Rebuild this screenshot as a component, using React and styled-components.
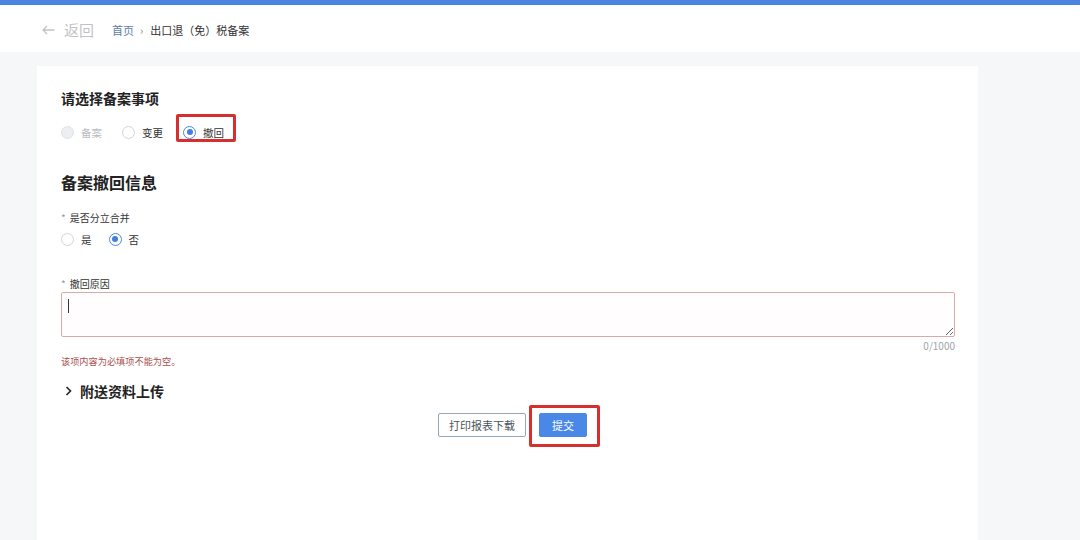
import React from "react";
import styled, { createGlobalStyle } from "styled-components";

const Global = createGlobalStyle`
  html, body { margin: 0; padding: 0; background: #f6f7f9; }
  body { font-family: "Noto Sans CJK SC", "Noto Sans", sans-serif; color: #222; }
  * { box-sizing: border-box; }
`;

const Page = styled.div`
  width: 1080px;
  height: 540px;
  overflow: hidden;
  background: #f6f7f9;
  display: flex;
  flex-direction: column;
`;

const TopBar = styled.div`
  height: 5px;
  background: #4a86dd;
`;

const Header = styled.div`
  height: 47px;
  background: #fff;
  display: flex;
  align-items: center;
  padding-left: 42px;
  padding-top: 2px;
`;

const Back = styled.div`
  display: flex;
  align-items: center;
  gap: 9px;
  color: #bfc3c8;
  font-size: 15px;
  margin-right: 18px;
`;

const Crumb = styled.span`
  font-size: 11px;
  color: ${(p) => (p.$link ? "#5b7ea6" : "#333")};
`;

const Sep = styled.span`
  font-size: 11px;
  color: #888;
  margin: 0 7px 0 6px;
`;

const Card = styled.div`
  margin: 14px 0 0 37px;
  width: 941px;
  flex: 1;
  background: #fff;
  padding: 22px 23px 0 24px;
  display: flex;
  flex-direction: column;
`;

const Title = styled.div`
  font-size: ${(p) => p.$size || 14}px;
  line-height: ${(p) => (p.$size || 14) + 6}px;
  font-weight: 700;
  color: #222;
  margin-top: ${(p) => p.$mt || 0}px;
  display: flex;
  align-items: center;
`;

const RadioRow = styled.div`
  display: flex;
  align-items: center;
  height: 20px;
  gap: ${(p) => p.$gap || 20}px;
  margin-top: ${(p) => p.$mt || 0}px;
`;

const RadioItem = styled.label`
  position: relative;
  display: flex;
  align-items: center;
  gap: 7px;
  font-size: 10.5px;
  color: ${(p) => (p.$disabled ? "#b8bcc2" : "#333")};
`;

const Circle = styled.span`
  width: 13px;
  height: 13px;
  border-radius: 50%;
  border: 1px solid ${(p) => (p.$checked ? "#4a88e0" : p.$disabled ? "#e0e2e6" : "#d2d5da")};
  background: ${(p) => (p.$disabled ? "#eceef1" : "#fff")};
  display: flex;
  align-items: center;
  justify-content: center;
  &::after {
    content: "";
    display: ${(p) => (p.$checked ? "block" : "none")};
    width: 6px;
    height: 6px;
    border-radius: 50%;
    background: #3f7fe0;
  }
`;

const Highlight = styled.span`
  position: absolute;
  left: ${(p) => p.$l}px;
  top: ${(p) => p.$t}px;
  width: ${(p) => p.$w}px;
  height: ${(p) => p.$h}px;
  border: 3px solid #d5302e;
  border-radius: 2px;
  pointer-events: none;
`;

const FieldLabel = styled.div`
  font-size: 10px;
  line-height: 14px;
  color: #333;
  margin-top: ${(p) => p.$mt || 0}px;
  &::before {
    content: "*";
    color: #999;
    margin-right: 4px;
  }
`;

const AreaWrap = styled.div`
  position: relative;
  margin-top: 1px;
  display: flex;
`;

const Area = styled.textarea`
  width: 100%;
  height: 45px;
  border: 1px solid #dba9a9;
  border-radius: 2px;
  background: #fffdfd;
  resize: vertical;
  outline: none;
  font-family: inherit;
  font-size: 12px;
`;

const Caret = styled.span`
  position: absolute;
  left: 7px;
  top: 7px;
  width: 1px;
  height: 14px;
  background: #333;
`;

const Counter = styled.div`
  font-size: 10px;
  line-height: 14px;
  color: #a0a4aa;
  text-align: right;
  margin-top: 2px;
`;

const ErrorText = styled.div`
  font-size: 9.2px;
  line-height: 14px;
  color: #a8524f;
  margin-top: 1px;
`;

const Chevron = styled.svg`
  width: 7px;
  height: 10px;
  margin: 0 8px 0 4px;
`;

const Actions = styled.div`
  display: flex;
  justify-content: center;
  gap: 13px;
  margin-top: 12px;
  padding-left: 9px;
`;

const Button = styled.button`
  position: relative;
  height: 24px;
  padding: 0 ${(p) => (p.$primary ? 12 : 10)}px;
  font-family: inherit;
  font-size: 11px;
  border-radius: 2px;
  border: 1px solid ${(p) => (p.$primary ? "#4a88e8" : "#93a8bd")};
  background: ${(p) => (p.$primary ? "#4a88e8" : "#fff")};
  color: ${(p) => (p.$primary ? "#fff" : "#4a5560")};
`;

export default function App() {
  return (
    <Page>
      <Global />
      <TopBar />
      <Header>
        <Back>
          <svg width="13" height="10" viewBox="0 0 13 10" fill="none" stroke="#bfc3c8" strokeWidth="1.3">
            <path d="M12.5 5H1M5 1L1 5l4 4" />
          </svg>
          返回
        </Back>
        <Crumb $link>首页</Crumb>
        <Sep>›</Sep>
        <Crumb>出口退（免）税备案</Crumb>
      </Header>
      <Card>
        <Title>请选择备案事项</Title>
        <RadioRow $mt={14}>
          <RadioItem $disabled>
            <Circle $disabled />
            备案
          </RadioItem>
          <RadioItem>
            <Circle />
            变更
          </RadioItem>
          <RadioItem>
            <Circle $checked />
            撤回
            <Highlight $l={-7} $t={-11} $w={60} $h={28} />
          </RadioItem>
        </RadioRow>
        <Title $size={16} $mt={29}>备案撤回信息</Title>
        <FieldLabel $mt={18}>是否分立合并</FieldLabel>
        <RadioRow $mt={4} $gap={17}>
          <RadioItem>
            <Circle />
            是
          </RadioItem>
          <RadioItem>
            <Circle $checked />
            否
          </RadioItem>
        </RadioRow>
        <FieldLabel $mt={28}>撤回原因</FieldLabel>
        <AreaWrap>
          <Area />
          <Caret />
        </AreaWrap>
        <Counter>0/1000</Counter>
        <ErrorText>该项内容为必填项不能为空。</ErrorText>
        <Title $mt={13}>
          <Chevron viewBox="0 0 7 10" fill="none" stroke="#222" strokeWidth="1.6">
            <path d="M1.5 1l4 4-4 4" />
          </Chevron>
          附送资料上传
        </Title>
        <Actions>
          <Button>打印报表下载</Button>
          <Button $primary>
            提交
            <Highlight $l={-11} $t={-9} $w={71} $h={42} />
          </Button>
        </Actions>
      </Card>
    </Page>
  );
}
